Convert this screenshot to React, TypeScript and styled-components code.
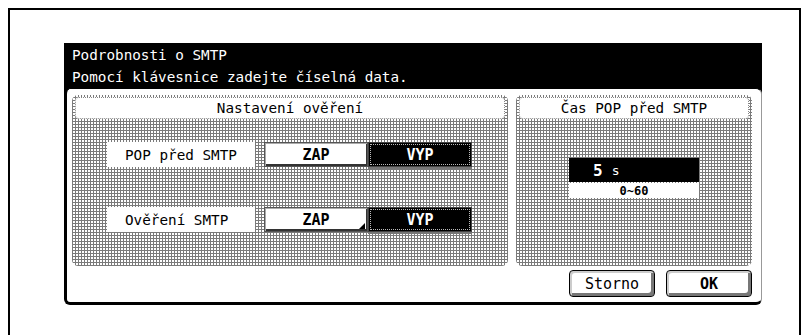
import React from "react";
import styled, { createGlobalStyle, css } from "styled-components";

const GlobalStyle = createGlobalStyle`
  html, body {
    margin: 0;
    padding: 0;
    background: #fff;
    overflow: hidden;
  }
  body {
    font-family: "DejaVu Sans Mono", "Liberation Mono", monospace;
    color: #000;
  }
`;

const hatch = css`
  background-color: #fff;
  background-image:
    repeating-linear-gradient(0deg, #7a7a7a 0 1px, transparent 1px 3px),
    repeating-linear-gradient(90deg, #7a7a7a 0 1px, transparent 1px 3px);
`;

const Frame = styled.div`
  margin: 8px 0 0 8px;
  width: 793px;
  height: 327px;
  border: 2px solid #000;
  border-bottom: none;
  box-sizing: border-box;
  padding: 33px 0 0 54px;
`;

const Dialog = styled.div`
  width: 698px;
  background: linear-gradient(#000 0 60px, #fff 60px);
`;

const Header = styled.div`
  display: flex;
  flex-direction: column;
  padding: 1px 0 0 8px;
  height: 45px;
  box-sizing: border-box;
  color: #fff;
  font-size: 14.3px;
  line-height: 22px;
`;

const Body = styled.div`
  height: 217px;
  box-sizing: border-box;
  background: #fff;
  border: 1px solid #000;
  border-left-width: 3px;
  border-bottom-width: 3px;
  border-right-color: #999;
  border-radius: 6px;
  padding: 6px 9px 5px 5px;
  display: flex;
  flex-direction: column;
`;

const Panels = styled.div`
  display: flex;
  gap: 8px;
  height: 171px;
`;

const Panel = styled.div<{ $w: number }>`
  ${hatch};
  width: ${(p) => p.$w}px;
  border-radius: 6px;
  padding: 2px 3px;
  box-sizing: border-box;
  display: flex;
  flex-direction: column;
`;

const PanelTitle = styled.div`
  height: 22px;
  background: #fff;
  border: 1px dotted #888;
  border-radius: 4px;
  box-sizing: border-box;
  display: flex;
  align-items: center;
  justify-content: center;
  font-size: 14.3px;
`;

const Rows = styled.div`
  display: flex;
  flex-direction: column;
  gap: 40px;
  padding: 23px 0 0 32px;
`;

const Row = styled.div`
  display: flex;
  align-items: center;
  height: 25px;
`;

const Label = styled.div`
  width: 148px;
  height: 25px;
  background: #fff;
  display: flex;
  align-items: center;
  padding-left: 18px;
  box-sizing: border-box;
  font-size: 14.3px;
  margin-right: 9px;
`;

const Toggle = styled.div<{ $on?: boolean; $more?: boolean }>`
  position: relative;
  width: 104px;
  height: 25px;
  box-sizing: border-box;
  display: flex;
  align-items: center;
  justify-content: center;
  font-weight: bold;
  font-size: 15px;
  ${(p) =>
    p.$on
      ? css`
          background: #000;
          color: #fff;
          border: 1px solid #444;
          outline: 1px dotted #bbb;
          outline-offset: -3px;
          box-shadow: 0 2px 0 #777;
        `
      : css`
          background: #fff;
          color: #000;
          border: 1px solid #555;
          box-shadow: inset 1px 1px 0 #aaa, inset -1px -2px 0 #333;
        `}
  ${(p) =>
    p.$more &&
    css`
      &::after {
        content: "";
        position: absolute;
        right: 2px;
        bottom: 2px;
        border-style: solid;
        border-width: 0 0 6px 6px;
        border-color: transparent transparent #000 transparent;
      }
    `}
`;

const Time = styled.div`
  display: flex;
  flex-direction: column;
  align-items: center;
  padding-top: 39px;
`;

const Value = styled.div`
  width: 130px;
  height: 24px;
  background: #000;
  color: #fff;
  display: flex;
  align-items: center;
  gap: 9px;
  padding-left: 24px;
  box-sizing: border-box;
  font-weight: bold;
  font-size: 16px;
`;

const Unit = styled.span`
  font-weight: normal;
  font-size: 13px;
`;

const Range = styled.div`
  width: 130px;
  height: 15px;
  margin-top: 1px;
  background: #fff;
  display: flex;
  align-items: center;
  justify-content: center;
  font-weight: bold;
  font-size: 12px;
`;

const Actions = styled.div`
  display: flex;
  justify-content: flex-end;
  gap: 11px;
  margin-top: auto;
`;

const Btn = styled.div<{ $bold?: boolean }>`
  width: 86px;
  height: 27px;
  box-sizing: border-box;
  background: #fff;
  border: 1px solid #000;
  border-radius: 4px;
  box-shadow: inset 2px 2px 0 #ccc, inset -3px -3px 0 #777;
  display: flex;
  align-items: center;
  justify-content: center;
  font-size: 15px;
  font-weight: ${(p) => (p.$bold ? "bold" : "normal")};
`;

export default function App() {
  return (
    <>
      <GlobalStyle />
      <Frame>
        <Dialog>
          <Header>
            <span>Podrobnosti o SMTP</span>
            <span>Pomocí klávesnice zadejte číselná data.</span>
          </Header>
          <Body>
            <Panels>
              <Panel $w={436}>
                <PanelTitle>Nastavení ověření</PanelTitle>
                <Rows>
                  <Row>
                    <Label>POP před SMTP</Label>
                    <Toggle>ZAP</Toggle>
                    <Toggle $on>VYP</Toggle>
                  </Row>
                  <Row>
                    <Label>Ověření SMTP</Label>
                    <Toggle $more>ZAP</Toggle>
                    <Toggle $on>VYP</Toggle>
                  </Row>
                </Rows>
              </Panel>
              <Panel $w={236}>
                <PanelTitle>Čas POP před SMTP</PanelTitle>
                <Time>
                  <Value>
                    5<Unit>s</Unit>
                  </Value>
                  <Range>0~60</Range>
                </Time>
              </Panel>
            </Panels>
            <Actions>
              <Btn>Storno</Btn>
              <Btn $bold>OK</Btn>
            </Actions>
          </Body>
        </Dialog>
      </Frame>
    </>
  );
}
